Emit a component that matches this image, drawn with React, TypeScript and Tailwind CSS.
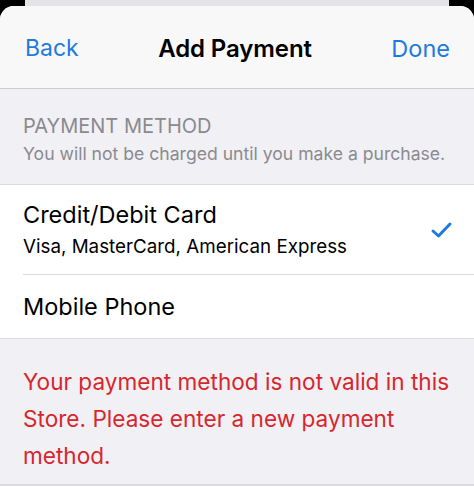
export default function App() {
  return (
    <div
      className="w-[474px] h-[499px] overflow-hidden bg-black flex flex-col"
      style={{ fontFamily: "Inter, 'Noto Sans', sans-serif" }}
    >
      {/* card peeking behind the sheet */}
      <div className="mx-[25px] h-[6px] bg-[#e4e4e6] shrink-0" />

      <div className="flex-1 bg-white rounded-t-[14px] overflow-hidden flex flex-col">
        {/* nav bar */}
        <div className="h-[83px] bg-[#f8f8f8] flex items-center justify-between pl-[25px] pr-[24px] pt-[3px] border-b border-[#cbcbcd]">
          <span className="text-[23px] text-[#1f7ae0]">Back</span>
          <span className="text-[24px] font-semibold text-black tracking-[-0.1px]">Add Payment</span>
          <span className="text-[23.5px] text-[#1f7ae0]">Done</span>
        </div>

        {/* section header */}
        <div className="bg-[#f1f0f5] h-[96px] px-[23px] pt-[25px] border-b border-[#dcdce0]">
          <div className="text-[20px] leading-[24px] text-[#8a8a8e]">PAYMENT METHOD</div>
          <div className="mt-[5px] text-[17.6px] leading-[22px] text-[#8a8a8e]">
            You will not be charged until you make a purchase.
          </div>
        </div>

        {/* options */}
        <div className="bg-white">
          <div className="h-[89px] flex items-center pr-[20px] pl-[23px]">
            <div className="flex-1">
              <div className="text-[23.5px] leading-[28px] text-black">Credit/Debit Card</div>
              <div className="mt-[6px] text-[18.8px] leading-[24px] text-black">
                Visa, MasterCard, American Express
              </div>
            </div>
            <svg width="24" height="20" viewBox="0 0 24 20" fill="none">
              <path
                d="M3 11 L8.5 16 L20 4"
                stroke="#1f7ae0"
                strokeWidth="3"
                strokeLinecap="round"
                strokeLinejoin="round"
              />
            </svg>
          </div>
          <div className="ml-[23px] h-px bg-[#dcdce0]" />
          <div className="h-[64px] flex items-center pl-[23px] border-b border-[#dcdce0]">
            <span className="text-[23.5px] text-black">Mobile Phone</span>
          </div>
        </div>

        {/* error footer */}
        <div className="bg-[#f1f0f5] h-[147px] px-[23px] pt-[24px] border-b-2 border-[#dcdce0]">
          <p className="text-[22.6px] leading-[37px] text-[#d7272c]">
            Your payment method is not valid in this Store. Please enter a new payment method.
          </p>
        </div>
        <div className="flex-1 bg-white" />
      </div>
    </div>
  );
}
